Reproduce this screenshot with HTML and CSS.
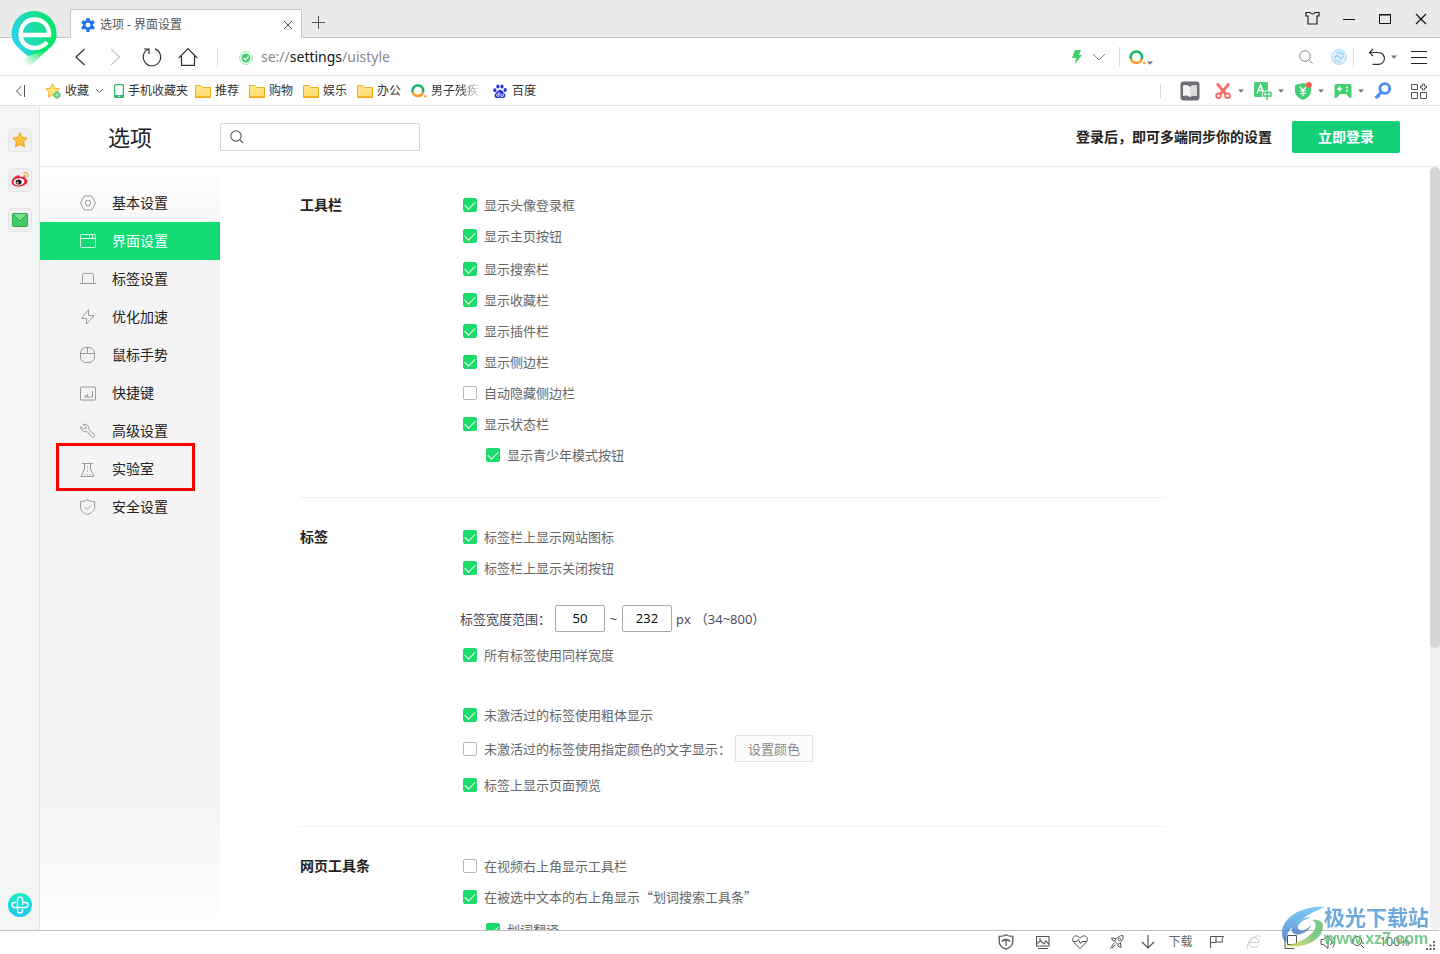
FILE: index.html
```html
<!DOCTYPE html>
<html lang="zh-CN">
<head>
<meta charset="utf-8">
<title>选项 - 界面设置</title>
<link rel="stylesheet" href="styles.css">
</head>
<body>
<svg class="defs" aria-hidden="true">
  <defs>
    <linearGradient id="gFolder" x1="0" y1="0" x2="0" y2="1"><stop offset="0" stop-color="#ffe793"/><stop offset="1" stop-color="#ffdc66"/></linearGradient>
    <linearGradient id="gPin" x1="0" y1=".8" x2="1" y2=".4"><stop offset="0" stop-color="#2bd4f6"/><stop offset=".5" stop-color="#1fdcb0"/><stop offset="1" stop-color="#05e566"/></linearGradient>
    <linearGradient id="gTail" x1="0" y1="1" x2=".7" y2=".1"><stop offset=".1" stop-color="#05e566" stop-opacity="0"/><stop offset=".7" stop-color="#05e566"/></linearGradient>
    <linearGradient id="gStar" x1="0" y1="0" x2="0" y2="1"><stop offset="0" stop-color="#ffdc4a"/><stop offset="1" stop-color="#ffb429"/></linearGradient>
    <linearGradient id="gMail" x1="0" y1="0" x2="0" y2="1"><stop offset="0" stop-color="#4fd06f"/><stop offset="1" stop-color="#45c765"/></linearGradient>
    <linearGradient id="gHealth" x1="0" y1="0" x2="0" y2="1"><stop offset="0" stop-color="#14f0c4"/><stop offset="1" stop-color="#20c4ec"/></linearGradient>
    <linearGradient id="gSwoosh" x1="0" y1="0" x2="0" y2="1"><stop offset="0" stop-color="#5cc0f4"/><stop offset="1" stop-color="#3f70c0"/></linearGradient>
    <linearGradient id="gLeaf" x1="0" y1="1" x2="1" y2="0"><stop offset="0" stop-color="#e6dc50"/><stop offset=".6" stop-color="#5cbd6a"/></linearGradient>
    <symbol id="folder" viewBox="0 0 16 14"><path d="M.5 1.500h5.200l1.800 2h8v10H.5z" fill="url(#gFolder)" stroke="#efb020"/><path d="M.5 12.900h15" stroke="#efa90e" stroke-width="1.200"/></symbol>
    <symbol id="caret" viewBox="0 0 6 4"><path d="M0 .5h6L3 3.700z" fill="#777"/></symbol>
    <symbol id="ring" viewBox="0 0 17 16"><path d="M1.950 10.100A5.700 5.700 0 1 1 12.650 10.100" fill="none" stroke="#16b66a" stroke-width="2.600"/><path d="M1.950 10.100A5.700 5.700 0 0 0 12.650 10.100" fill="none" stroke="#fd9d30" stroke-width="2.600"/><circle cx="15.200" cy="14" r="1.300" fill="#fd9d30"/></symbol>
  </defs>
</svg>

<header class="tabbar">
  <svg class="logo" viewBox="0 0 46 58" aria-label="浏览器"><path d="M23 1A22.500 22.500 0 0 0 .5 23.500C.5 33 7 38 17 46l12-4 11-5c4-4 5.500-8 5.500-13.500A22.500 22.500 0 0 0 23 1z" fill="url(#gPin)"/><path d="M45.500 25c-1 7-5 11-9 15L19 56c-5 1-9-1-8-3l8-9 13-12z" fill="url(#gTail)"/><path d="M9.500 25c0-9 6-15.500 14-15.500 8 0 14 5.500 14.500 13.500v2H10M9.500 25c.5 8 6.500 13 14 13 5.500 0 9.500-2 12.500-6" fill="none" stroke="#fff" stroke-width="4.400"/></svg>
  <div class="tab">
    <svg class="i14" viewBox="0 0 14 14"><g fill="#1f72e8"><circle cx="7" cy="7" r="5"/><path d="M5.500 0h3l.5 3H5zM5.500 14h3l.5-3H5z"/><path d="M5.500 0h3l.5 3H5zM5.500 14h3l.5-3H5z" transform="rotate(60 7 7)"/><path d="M5.500 0h3l.5 3H5zM5.500 14h3l.5-3H5z" transform="rotate(120 7 7)"/></g><circle cx="7" cy="7" r="2.400" fill="#fff"/></svg>
    <span class="tab-title">选项 - 界面设置</span>
    <button class="plain" aria-label="关闭标签"><svg class="i10" viewBox="0 0 10 10"><path d="M1 1l8 8M9 1L1 9" stroke="#444" fill="none"/></svg></button>
  </div>
  <button class="plain newtab" aria-label="新标签"><svg class="i14" viewBox="0 0 14 14"><path d="M6.500 0v13M0 6.500h13" stroke="#555" fill="none"/></svg></button>
  <div class="winbtns">
    <button class="plain cell" aria-label="皮肤"><svg class="i16" viewBox="0 0 16 16"><path d="M5 1.500C6 3.500 9 3.500 10 1.500h4v3.500h-2v8h-9V5H1V1.500z" fill="none" stroke="#222" stroke-width="1.200"/></svg></button>
    <button class="plain cell" aria-label="最小化"><svg class="i12" viewBox="0 0 12 12"><path d="M0 6.500h12" stroke="#111"/></svg></button>
    <button class="plain cell" aria-label="最大化"><svg class="i12" viewBox="0 0 12 12"><path d="M.5 1.500h11v9H.5zM0 2h12" fill="none" stroke="#111"/></svg></button>
    <button class="plain cell" aria-label="关闭"><svg class="i12" viewBox="0 0 12 12"><path d="M1 1l10 10M11 1L1 11" stroke="#111" stroke-width="1.200" fill="none"/></svg></button>
  </div>
</header>

<div class="toolbar">
  <button class="plain cell" aria-label="后退"><svg class="i20" viewBox="0 0 20 20"><path d="M14.500 2L6 10l8.500 8" fill="none" stroke="#333" stroke-width="1.200"/></svg></button>
  <button class="plain cell" aria-label="前进"><svg class="i20" viewBox="0 0 20 20"><path d="M5 2l8.500 8L5 18" fill="none" stroke="#c8c8c8" stroke-width="1.200"/></svg></button>
  <button class="plain cell" aria-label="刷新"><svg class="i20" viewBox="0 0 20 20"><path d="M13 1.900A8.700 8.700 0 1 1 6 2.300M2 2h5v5" fill="none" stroke="#333" stroke-width="1.200"/></svg></button>
  <button class="plain cell" aria-label="主页"><svg class="i20" viewBox="0 0 20 20"><path d="M.8 11L10 1.600 19.200 11M3.500 9v9.400h13V9" fill="none" stroke="#333" stroke-width="1.200"/></svg></button>
  <i class="vline vline-first"></i>
  <svg class="i14 badge" viewBox="0 0 14 14"><circle cx="7" cy="7" r="6.400" fill="none" stroke="#8fe3ab"/><circle cx="7" cy="7" r="4.500" fill="#42cf70"/><path d="M4.600 7l1.800 1.900L9.600 5.500" fill="none" stroke="#fff" stroke-width="1.200"/></svg>
  <div class="url">se://<b>settings</b>/uistyle</div>
  <svg class="bolt" viewBox="0 0 10 14"><path d="M3 0h6L7 5h3L3 14l1-6H0z" fill="#42d06f"/></svg>
  <button class="plain chev" aria-label="展开"><svg class="i14" viewBox="0 0 14 14"><path d="M1 4l6 6 6-6" fill="none" stroke="#888"/></svg></button>
  <i class="vline"></i>
  <button class="plain engine" aria-label="搜索引擎"><svg class="ring"><use href="#ring"/></svg><svg class="caret"><use href="#caret"/></svg></button>
  <input class="websearch" type="text" aria-label="搜索">
  <button class="plain" aria-label="搜索"><svg class="i14" viewBox="0 0 14 14"><path d="M10.200 10.200L13.500 13.500" stroke="#888"/><circle cx="6" cy="6" r="5.300" fill="none" stroke="#888"/></svg></button>
  <svg class="i16 sync" viewBox="0 0 16 16"><circle cx="8" cy="8" r="7.400" fill="#e3f2fe" stroke="#a9d8fb"/><path d="M3 9.500l3-3.500 4 4 3-3.500M4 12.500l1.500-2M11 5.500l1.500-2M5.500 3.500h4l1.500 2M6 12.500h4" fill="none" stroke="#9ad0f8" stroke-width="1.300"/></svg>
  <i class="vline"></i>
  <button class="plain undo" aria-label="恢复"><svg class="undoicon" viewBox="0 0 18 18"><path d="M5 1L1.500 4.500 5 8M1.500 4.500h9a5.800 5.800 0 0 1 0 11.800H4.500" fill="none" stroke="#333" stroke-width="1.200"/></svg><svg class="caret"><use href="#caret"/></svg></button>
  <button class="plain" aria-label="菜单"><svg class="i16" viewBox="0 0 16 16"><path d="M0 2.500h16M0 8.500h16M0 14.500h16" stroke="#222"/></svg></button>
</div>

<nav class="bookmarks" aria-label="收藏栏">
  <button class="plain collapse" aria-label="收起"><svg class="i12" viewBox="0 0 12 12"><path d="M6.500 1L1.500 6l5 5M9.500 0v12" fill="none" stroke="#555"/></svg></button>
  <button class="plain fav"><svg class="i16" viewBox="0 0 16 16"><path d="M7.500.8l2.100 4.500 4.900.6-3.600 3.400.9 4.900-4.300-2.400-4.400 2.400.9-4.900L.6 5.900l4.800-.6z" fill="#ffe37d" stroke="#f5b62c"/><path d="M12 8.500v7M8.500 12h7" stroke="#3fc46d" stroke-width="3.400"/><path d="M12 9.700v4.600M9.700 12h4.600" stroke="#d4f5df" stroke-width="1"/></svg><span>收藏</span><svg class="smallchev" viewBox="0 0 9 6"><path d="M1 1l3.500 3.500L8 1" fill="none" stroke="#666"/></svg></button>
  <a class="bm" href="#"><svg class="phone" viewBox="0 0 10 14"><rect x=".6" y=".6" width="8.800" height="12.800" rx="1" fill="#fff" stroke="#2db86a" stroke-width="1.200"/><path d="M0 11h10v2.500H0z" fill="#2db86a"/><path d="M4 12.300h2" stroke="#fff"/></svg><span>手机收藏夹</span></a>
  <a class="bm folder" href="#"><svg class="folderi"><use href="#folder"/></svg><span>推荐</span></a>
  <a class="bm folder" href="#"><svg class="folderi"><use href="#folder"/></svg><span>购物</span></a>
  <a class="bm folder" href="#"><svg class="folderi"><use href="#folder"/></svg><span>娱乐</span></a>
  <a class="bm folder" href="#"><svg class="folderi"><use href="#folder"/></svg><span>办公</span></a>
  <a class="bm" href="#"><svg class="ring16"><use href="#ring"/></svg><span class="fade">男子残疾假</span></a>
  <a class="bm baidu" href="#"><svg class="i14" viewBox="0 0 14 14"><g fill="#2630dd"><ellipse cx="1.900" cy="6.200" rx="1.600" ry="2"/><ellipse cx="4.900" cy="2.500" rx="1.600" ry="2.100"/><ellipse cx="9" cy="2.500" rx="1.600" ry="2.100"/><ellipse cx="12.100" cy="6" rx="1.600" ry="2"/><path d="M7 5.700c2 0 2.800 2.300 4.500 3.800 2 2 .6 4.500-1.500 4.500-1 0-2-.3-3-.3s-2 .3-3 .3c-2.200 0-3.500-2.500-1.500-4.500C4.200 8 5 5.700 7 5.700z"/></g><path d="M6 8v4.300H4.500c-1.200 0-1.200-2.200 0-2.200H6M8 9.500v2.800h2.200V9.500" fill="none" stroke="#fff" stroke-width=".9"/></svg><span>百度</span></a>
  <div class="plugins">
    <i class="vline vline-short"></i>
    <button class="plain" aria-label="阅读"><svg class="i20" viewBox="0 0 20 20"><rect x=".5" y=".5" width="19" height="19" rx="3" fill="#6d6d78"/><path d="M3 4.500c3-1 5-.5 7 1.500 2-2 4-2.500 7-1.500V15c-3-1-5-.5-7 1-2-1.500-4-2-7-1z" fill="#f3f3f3"/><path d="M10 6v10c2-1.500 4-2 7-1V4.500C14 3.500 12 4 10 6z" fill="#dcdcdf"/></svg></button>
    <button class="plain plug" aria-label="截图"><svg class="i18" viewBox="0 0 18 18"><path d="M3 1.500l9 11M15 1.500l-9 11" stroke="#fb6f68" stroke-width="2.800"/><circle cx="4.500" cy="13.800" r="2.300" fill="none" stroke="#fb6f68" stroke-width="1.800"/><circle cx="13.500" cy="13.800" r="2.300" fill="none" stroke="#fb6f68" stroke-width="1.800"/></svg><svg class="caret"><use href="#caret"/></svg></button>
    <button class="plain plug" aria-label="翻译"><svg class="i18" viewBox="0 0 18 18"><rect width="14" height="15" rx="1.500" fill="#43cf73"/><path d="M3 11.500l3.500-8.500L10 11.500M4.500 8.500h4.500" fill="none" stroke="#fff" stroke-width="1.500"/><path d="M13 8v10M9.500 10.500h7v3.500h-7z" fill="none" stroke="#fff" stroke-width="3.200"/><path d="M13 8.500V18M9.500 10.500h7.500v3.500H9.500z" fill="none" stroke="#43cf73" stroke-width="1.500"/></svg><svg class="caret"><use href="#caret"/></svg></button>
    <button class="plain plug" aria-label="购物助手"><svg class="i18" viewBox="0 0 18 18"><path d="M9 1l8 2v6c0 4.500-3.500 7-8 9-4.500-2-8-4.500-8-9V3z" fill="#43cf73"/><path d="M6 5l3 3.500L12 5M9 8.500V14M6 9h6M6 11.500h6" fill="none" stroke="#fff" stroke-width="1.200"/><circle cx="14.800" cy="3" r="3" fill="#ff5c52"/></svg><svg class="caret"><use href="#caret"/></svg></button>
    <button class="plain plug" aria-label="游戏"><svg class="i18" viewBox="0 0 18 18"><path d="M2.500 2h13a2 2 0 0 1 2 2v10.500c0 1.500-1.500 1.800-2.500 1l-3-3.500H6l-3 3.500c-1 .8-2.500.5-2.500-1V4a2 2 0 0 1 2-2z" fill="#43cf73"/><path d="M5.500 4.500v5M3 7h5" stroke="#fff" stroke-width="1.500"/><circle cx="13" cy="5.500" r="1" fill="#fff"/><circle cx="13" cy="8.700" r="1" fill="#fff"/></svg><svg class="caret"><use href="#caret"/></svg></button>
    <button class="plain" aria-label="密码"><svg class="i18" viewBox="0 0 18 18"><circle cx="10.800" cy="6.500" r="4.900" fill="none" stroke="#4b8df8" stroke-width="2.800"/><path d="M7.500 10L1.500 16M2.500 13l2.500 2.500" stroke="#4b8df8" stroke-width="3"/></svg></button>
    <button class="plain grid" aria-label="扩展中心"><svg class="i16" viewBox="0 0 16 16"><path d="M.5 1.500h6v5h-6zM.5 9.500h6v6h-6zM9.500 9.500h6v6h-6z" fill="none" stroke="#555"/><path d="M11.500 1h2v2h2v2h-2v2h-2V5h-2V3h2z" fill="none" stroke="#555"/></svg></button>
  </div>
</nav>

<div class="body">
  <aside class="sidebar">
    <button class="side" aria-label="收藏夹"><svg class="i16" viewBox="0 0 16 16"><path d="M8 .8l2.200 4.700 5 .7-3.700 3.500 1 5.200L8 12.400l-4.500 2.500 1-5.200L.8 6.200l5-.7z" fill="url(#gStar)" stroke="#f29b27"/></svg></button>
    <button class="side" aria-label="微博"><svg class="i18" viewBox="0 0 18 18"><path d="M11 6c2-1 4-.6 3.300 1.800 2.700.8 3 3.200.7 5.200-3.500 3-9.500 3.300-12.500 1.200-3.200-2.300-2.200-5.200.8-8C6 3.800 9 3.400 8.600 6c.8-.2 1.500-.3 2.400 0z" fill="#e6202c"/><ellipse cx="8" cy="10.800" rx="5.500" ry="3.600" fill="#fff" transform="rotate(-8 8 10.800)"/><ellipse cx="7.600" cy="11" rx="3" ry="2.600" fill="#222"/><circle cx="6.600" cy="11.700" r=".9" fill="#fff"/><path d="M12.500 1.500c3-.6 5 1.500 4.300 4.500M12.700 4c1.500-.2 2 .6 1.700 2" fill="none" stroke="#f6a23c" stroke-width="1.300"/></svg></button>
    <button class="side" aria-label="邮箱"><svg class="i16" viewBox="0 0 16 14"><rect x=".5" y=".5" width="15" height="13" rx="1" fill="url(#gMail)" stroke="#25a950"/><path d="M1 1h14L8 8z" fill="#7be092"/><path d="M1 1l7 7 7-7" fill="none" stroke="#25a950"/></svg></button>
    <button class="plain health" aria-label="健康助手"><svg class="i24" viewBox="0 0 24 24"><circle cx="12" cy="12" r="12" fill="url(#gHealth)"/><path d="M14.500 16v1.500a2.500 2.500 0 0 1-5 0v-11a2.500 2.500 0 0 1 5 0V12M12 14.500H6.500a2.500 2.500 0 0 1 0-5H8M14.500 9.500h3a2.500 2.500 0 0 1 0 5H12" fill="none" stroke="#fff" stroke-width="1.400"/></svg></button>
  </aside>

  <div class="settings">
    <div class="head">
      <h1>选项</h1>
      <label class="find"><svg class="i14" viewBox="0 0 14 14"><circle cx="6" cy="6" r="5.200" fill="none" stroke="#555" stroke-width="1.100"/><path d="M9.800 9.800L13 13" stroke="#555" stroke-width="1.100"/></svg><input type="text" aria-label="搜索选项"></label>
      <span class="tip">登录后，即可多端同步你的设置</span>
      <button class="login">立即登录</button>
    </div>
    <div class="panes">
      <nav class="menu" aria-label="设置分类">
        <a href="#"><svg viewBox="0 0 16 16"><path d="M4.300 1h7.400L15.500 8l-3.800 7H4.300L.5 8z"/><circle cx="8" cy="8" r="2.800"/></svg>基本设置</a>
        <a href="#" class="on"><svg viewBox="0 0 16 16"><rect x=".5" y="1.500" width="15" height="13" rx="1"/><path d="M.5 5.500h15M9.500 2v3M12.500 2v3"/></svg>界面设置</a>
        <a href="#"><svg viewBox="0 0 16 16"><path d="M0 12.500h16M2.500 12.500V3.500a1 1 0 0 1 1-1h9a1 1 0 0 1 1 1v9"/></svg>标签设置</a>
        <a href="#"><svg viewBox="0 0 16 16"><path d="M8.500.8v5.700H14L6.500 15V9.500H1.500z"/></svg>优化加速</a>
        <a href="#"><svg viewBox="0 0 16 16"><rect x=".5" y=".5" width="14" height="15" rx="5.500"/><path d="M.5 6.500h14M7.500.5v6"/></svg>鼠标手势</a>
        <a href="#"><svg viewBox="0 0 16 16"><rect x=".5" y="2" width="15" height="13" rx="1"/><path d="M12.500 6v6H4.500l3-2.500v2"/></svg>快捷键</a>
        <a href="#"><svg viewBox="0 0 16 16"><path d="M3 1.500C6 .5 9.500 2.500 8.800 6.500l5.500 5c1.200 1.600-.8 3.800-2.400 2.400L7 8.500C3.500 9.500.3 7 .8 3.500L3.500 6l2.300-.5.2-2z"/></svg>高级设置</a>
        <a href="#" class="marked"><svg viewBox="0 0 16 16"><path d="M2 2.500h11M4.500 2.500V8L1 15.500h13L10.500 8V2.500"/><path d="M7.500 5v1M7.500 7.500v1M7.500 10v1M5 13v1M7.500 13v1M10 13v1"/></svg>实验室</a>
        <a href="#"><svg viewBox="0 0 16 16"><path d="M7.500.7C9.500 2 12 2.600 14.700 2.700v5.500c0 3.500-3 5.800-7.200 7.300C3.300 14 .5 11.700.5 8.200V2.700C3 2.600 5.500 2 7.500.7z"/><path d="M4.500 8L7 10.500l4-4"/></svg>安全设置</a>
      </nav>
      <main class="content">
        <section>
          <h2>工具栏</h2>
          <div>
            <label class="row"><input type="checkbox" checked>显示头像登录框</label>
            <label class="row"><input type="checkbox" checked>显示主页按钮</label>
            <label class="row gap-s"><input type="checkbox" checked>显示搜索栏</label>
            <label class="row"><input type="checkbox" checked>显示收藏栏</label>
            <label class="row"><input type="checkbox" checked>显示插件栏</label>
            <label class="row"><input type="checkbox" checked>显示侧边栏</label>
            <label class="row"><input type="checkbox">自动隐藏侧边栏</label>
            <label class="row"><input type="checkbox" checked>显示状态栏</label>
            <label class="row sub"><input type="checkbox" checked>显示青少年模式按钮</label>
          </div>
        </section>
        <section>
          <h2>标签</h2>
          <div>
            <label class="row"><input type="checkbox" checked>标签栏上显示网站图标</label>
            <label class="row"><input type="checkbox" checked>标签栏上显示关闭按钮</label>
            <div class="range"><label for="wmin">标签宽度范围：</label><input id="wmin" type="text" value="50"><span class="tilde">~</span><input type="text" value="232" aria-label="最大宽度"><span>px</span><span class="hint">（34~800）</span></div>
            <label class="row gap-m"><input type="checkbox" checked>所有标签使用同样宽度</label>
            <label class="row gap-l"><input type="checkbox" checked>未激活过的标签使用粗体显示</label>
            <div class="pair"><label class="row"><input type="checkbox">未激活过的标签使用指定颜色的文字显示：</label><button class="setcolor">设置颜色</button></div>
            <label class="row gap-p"><input type="checkbox" checked>标签上显示页面预览</label>
          </div>
        </section>
        <section>
          <h2>网页工具条</h2>
          <div>
            <label class="row"><input type="checkbox">在视频右上角显示工具栏</label>
            <label class="row"><input type="checkbox" checked>在被选中文本的右上角显示“划词搜索工具条”</label>
            <label class="row sub gap-s"><input type="checkbox" checked>划词翻译</label>
          </div>
        </section>
      </main>
      <div class="scroll"><div class="thumb"></div></div>
    </div>
  </div>
</div>

<footer class="status">
  <button class="plain cell37" aria-label="安全"><svg viewBox="0 0 16 16"><path d="M8 .7c2 1.200 4 1.600 6.800 1.700v5C14.800 11.200 12 13.700 8 15.200 4 13.700 1.200 11.200 1.200 7.400v-5C4 2.300 6 1.900 8 .7z" stroke-width="1.300"/><path d="M8 6v6M4 7.500C5 4.500 11 4.500 12 7.500 10 5.500 6 5.500 4 7.500z" stroke-width="1.200"/></svg></button>
  <button class="plain cell37" aria-label="图片"><svg viewBox="0 0 16 16"><path d="M1.500 2.500h12.500v9.500H1.500zM3 14.500h10M2.500 9.500l3-3 3.500 3.500 2-3 2.500 3" stroke-width="1.100"/><circle cx="5" cy="5" r=".5"/></svg></button>
  <button class="plain cell37" aria-label="健康"><svg viewBox="0 0 16 16"><path d="M8 14.500L1.800 8.500C-1 5 2 1 5 2c1.500.4 2.300 1.200 3 2.300C8.700 3.200 9.500 2.400 11 2c3-1 6 3 3.200 6.500zM1 7.500h4l1.500-2 2 4 1.500-2h5"/></svg></button>
  <button class="plain cell37" aria-label="加速"><svg viewBox="0 0 16 16"><path d="M14 1.500c-4 0-6 2-8.500 5.500l3.500 3.500C12.500 8 14.500 6 14 1.500zM7 4.500L2.500 4 4 7h1.500M11.500 9l.5 4.500L9 12v-1.500M5 9l-3.500 5.500M6.500 10.500L3 14"/><circle cx="10.500" cy="5.500" r="1.300"/></svg></button>
  <button class="plain download"><svg viewBox="0 0 16 16"><path d="M8 1v13M2 8l6 6 6-6" stroke-width="1.200"/></svg><span>下载</span></button>
  <button class="plain cell37" aria-label="旗标"><svg viewBox="0 0 16 16"><path d="M1.500 14V2.500H7V8.500H1.500M7 2.500h7.500l-1.500 3 .5 2.500H7"/></svg></button>
  <button class="plain cell37 dim" aria-label="内核"><svg viewBox="0 0 16 16"><path d="M3 8.500h10C13 1.500 3 2.500 3 8.500c0 6 8 6 10 2M2 15C-2 11 9-1 14.500 2.500"/></svg></button>
  <button class="plain cell37" aria-label="窗口"><svg viewBox="0 0 16 16"><path d="M4.500 1.500h9v9h-9zM3.500 4H2v10.500h9.500"/></svg></button>
  <button class="plain cell37" aria-label="声音"><svg viewBox="0 0 16 16"><path d="M1 5.500h2.500L8 1.500v13L3.500 10.500H1zM10.500 5a4.500 4.500 0 0 1 0 6M12.500 2.500c3 3 3 8 0 11"/></svg></button>
  <button class="plain zoom"><svg viewBox="0 0 16 16"><circle cx="7" cy="7" r="4.500"/><path d="M10.500 10.500L14 14"/></svg><span>100%</span></button>
  <svg class="grip" viewBox="0 0 9 9"><path d="M7 1h2M7 4.500h2M7 8h2M3.500 4.500h2M3.500 8h2M0 8h2" /></svg>
  <div class="mark">
    <svg class="swoosh" viewBox="0 0 48 42"><path d="M44 1C24-1 1 10 1 27c0 5 2 8 5 9-3-9 8-23 38-35z" fill="url(#gSwoosh)"/><path d="M5 40c16 3 37-5 37-20 0-4-4-7-11-6 5 2 5 9-1 14-6 6-15 9-25 12z" fill="url(#gLeaf)"/><path d="M30 11C17 11 9 19 11 26c3 5 16 2 19-7-5 6-12 7-13 3-1-4 5-8 13-11z" fill="url(#gSwoosh)"/></svg>
    <div><div class="mark-cn">极光下载站</div><div class="mark-url">www.xz7.com</div></div>
  </div>
</footer>
</body>
</html>
```
FILE: styles.css
```css
*, *::before, *::after { box-sizing: border-box; }
html, body { height: 100%; }
body {
  margin: 0;
  display: flex;
  flex-direction: column;
  overflow: hidden;
  background: #fff;
  color: #444;
  font: 12px/16px "Open Sans", "Noto Sans CJK SC", sans-serif;
}
button, input { font: inherit; color: inherit; }
a { color: inherit; text-decoration: none; }
svg { display: block; flex: none; }
.defs { position: absolute; width: 0; height: 0; }
.plain { display: flex; align-items: center; justify-content: center; border: 0; padding: 0; background: none; }
.cell { width: 36px; height: 36px; }
.i10 { width: 10px; height: 10px; }
.i12 { width: 12px; height: 12px; }
.i14 { width: 14px; height: 14px; }
.i16 { width: 16px; height: 16px; }
.i18 { width: 18px; height: 18px; }
.i20 { width: 20px; height: 20px; }
.i24 { width: 24px; height: 24px; }
.caret { width: 6px; height: 4px; }
.vline { width: 1px; height: 20px; background: #d9d9d9; }

/* Tab strip */
.tabbar { position: relative; display: flex; align-items: flex-end; height: 38px; flex: none; padding-left: 70px; background: #eaeaea; border-bottom: 1px solid #c6c6c6; }
.logo { position: absolute; left: 11px; top: 10px; width: 46px; height: 58px; z-index: 2; }
.tab { display: flex; align-items: center; width: 232px; height: 29px; margin-bottom: -1px; padding: 1px 8px 0 10px; gap: 5px; background: #fff; border: 1px solid #c6c6c6; border-bottom: 0; }
.tab-title { flex: 1; color: #555; }
.newtab { width: 34px; height: 28px; }
.winbtns { display: flex; margin-left: auto; padding-right: 1px; }

/* Address row */
.toolbar { display: flex; align-items: center; height: 38px; flex: none; padding: 0 13px 0 62px; border-bottom: 1px solid #e0e0e0; }
.vline-first { margin: 0 21px 0 11px; }
.badge { margin-top: 3px; }
.url { flex: 1; margin-left: 8px; font-family: "Noto Sans", sans-serif; font-size: 14px; line-height: 20px; color: #888; }
.url b { font-weight: 400; color: #111; }
.bolt { width: 10px; height: 14px; }
.chev { margin: 0 13px 0 10px; }
.engine { align-items: flex-end; margin-left: 9px; gap: 1px; }
.ring { width: 17px; height: 16px; }
.websearch { width: 146px; height: 28px; border: 0; outline: 0; background: none; }
.sync { margin: 0 6px 0 18px; }
.undo { margin: 0 14px; gap: 5px; }
.undoicon { width: 18px; height: 18px; }

/* Bookmark row */
.bookmarks { display: flex; align-items: center; gap: 7px; height: 30px; flex: none; padding: 0 13px 0 15px; border-bottom: 1px solid #e0e0e0; color: #333; }
.collapse { margin-right: 11px; }
.fav { gap: 4px; margin-right: 3px; }
.smallchev { width: 9px; height: 6px; margin-left: 2px; }
.bm { display: flex; align-items: center; gap: 4px; white-space: nowrap; }
.folder { margin-right: 3px; }
.folderi { width: 16px; height: 14px; }
.phone { width: 10px; height: 14px; }
.ring16 { width: 16px; height: 15px; }
.fade { width: 50px; overflow: hidden; -webkit-mask-image: linear-gradient(90deg, #000 60%, transparent); mask-image: linear-gradient(90deg, #000 60%, transparent); }
.baidu { margin-left: 5px; }
.baidu span { margin-left: 1px; }
.plugins { display: flex; align-items: center; gap: 10px; margin-left: auto; }
.vline-short { height: 14px; margin-right: 9px; }
.plug { gap: 6px; }
.plugins .plain:nth-of-type(1) { margin-right: 4px; }
.grid { margin-left: 9px; }

/* Main area */
.body { display: flex; flex: 1; min-height: 0; }
.sidebar { display: flex; flex-direction: column; align-items: center; gap: 16px; width: 40px; flex: none; padding: 22px 0 13px; background: #f4f6f5; border-right: 1px solid #e2e2e2; }
.side { display: flex; align-items: center; justify-content: center; width: 24px; height: 24px; padding: 0; background: #efefef; border: 1px solid #e6e6e6; border-radius: 3px; }
.health { margin-top: auto; }
.settings { display: flex; flex-direction: column; flex: 1; min-width: 0; }
.head { display: flex; align-items: center; height: 61px; flex: none; padding: 1px 40px 0 68px; border-bottom: 1px solid #e8e8e8; }
.head h1 { width: 112px; margin: 0; font-size: 22px; line-height: 30px; font-weight: 400; color: #222; }
.find { display: flex; align-items: center; gap: 8px; width: 200px; height: 28px; padding: 0 9px; border: 1px solid #d6d6d6; border-radius: 2px; }
.find input { flex: 1; min-width: 0; border: 0; outline: 0; background: none; }
.tip { margin-left: auto; font-size: 14px; line-height: 20px; font-weight: 700; color: #222; }
.login { width: 108px; height: 32px; margin-left: 20px; padding: 0; border: 0; border-radius: 2px; background: #12cf77; color: #fff; font-size: 14px; font-weight: 700; }
.panes { display: flex; flex: 1; min-height: 0; }
.menu { width: 180px; flex: none; padding-top: 17px; background: linear-gradient(#fff, #f4f4f4 70px, #f4f4f4 calc(100% - 120px), #fff); }
.menu a { position: relative; display: flex; align-items: center; gap: 16px; height: 38px; padding-left: 40px; font-size: 14px; line-height: 20px; color: #222; }
.menu svg { width: 16px; height: 16px; fill: none; stroke: #999; }
.menu a.on { background: #12db74; color: #fff; }
.menu .on svg { stroke: #d8ffe8; }
.marked::after { content: ""; position: absolute; left: 16px; top: -7px; width: 139px; height: 48px; border: 3px solid #f00; }

.content { flex: 1; min-width: 0; overflow: hidden; padding: 0 265px 0 80px; }
section { display: grid; grid-template-columns: 160px 1fr; padding: 23px 0 26px; border-bottom: 1px solid #f0f0f0; }
section:first-child { padding: 22px 0 27px; }
section h2 { margin: 0; font-size: 14px; line-height: 31px; font-weight: 700; color: #222; }
.row { display: flex; align-items: center; gap: 7px; width: fit-content; height: 31px; padding-left: 3px; font: 13px/18px "Noto Sans CJK SC", sans-serif; color: #666; }
.sub { padding-left: 26px; }
.gap-s { margin-top: 2px; }
.gap-m { margin-top: 7px; }
.gap-p { margin-top: 5px; }
.gap-l { margin-top: 29px; }
.row input { position: relative; appearance: none; width: 14px; height: 14px; margin: 0; flex: none; border: 1px solid #b8b8b8; border-radius: 2px; background: #fff; }
.row input:checked { border-color: #1bdb6a; background: #1bdb6a; }
.row input:checked::after { content: ""; position: absolute; left: 1px; top: 2px; width: 10px; height: 6px; border: solid #fff; border-width: 0 0 1px 1px; transform: rotate(-45deg); }
.range { display: flex; align-items: center; height: 27px; margin-top: 22px; font-size: 13px; line-height: 18px; color: #445; }
.range input { width: 50px; height: 27px; padding: 0 0 1px; border: 1px solid #aaa; border-radius: 2px; text-align: center; color: #000; }
.range label { width: 95px; }
.tilde { width: 17px; text-align: center; }
.range input + span:not(.tilde) { margin-left: 4px; }
.hint { margin-left: 4px; }
.pair { display: flex; align-items: center; gap: 4px; margin-top: 3px; }
.setcolor { width: 78px; height: 27px; padding: 0; border: 1px solid #e2e2e2; border-radius: 1px; background: #fbfbfb; font-size: 13px; color: #888; }
.scroll { width: 10px; flex: none; border-radius: 5px; background: #f0f0f0; }
.thumb { height: 63%; border-radius: 5px; background: #d6d6d6; }

/* Status bar */
.status { position: relative; display: flex; align-items: center; justify-content: flex-end; height: 24px; flex: none; padding: 0 5px 1px 0; border-top: 1px solid #c0c0c0; color: #666; }
.status .plain svg { width: 16px; height: 16px; fill: none; stroke: #555; }
.status .dim svg { stroke: #ccc; }
.cell37 { width: 37px; }
.download { gap: 12px; padding: 0 6px 0 5px; }
.zoom { gap: 13px; padding: 0 16px 0 4px; }
.grip { width: 9px; height: 9px; margin-top: 6px; stroke: #666; stroke-width: 2; }
.mark { position: absolute; right: 11px; bottom: 6px; display: flex; align-items: center; opacity: .8; pointer-events: none; }
.swoosh { width: 48px; height: 42px; margin-right: -5px; }
.mark-cn { font-size: 21px; line-height: 25px; font-weight: 700; color: #4a94d6; }
.mark-url { font: 700 16px/18px "Liberation Sans", sans-serif; color: #54bd6c; }
```
